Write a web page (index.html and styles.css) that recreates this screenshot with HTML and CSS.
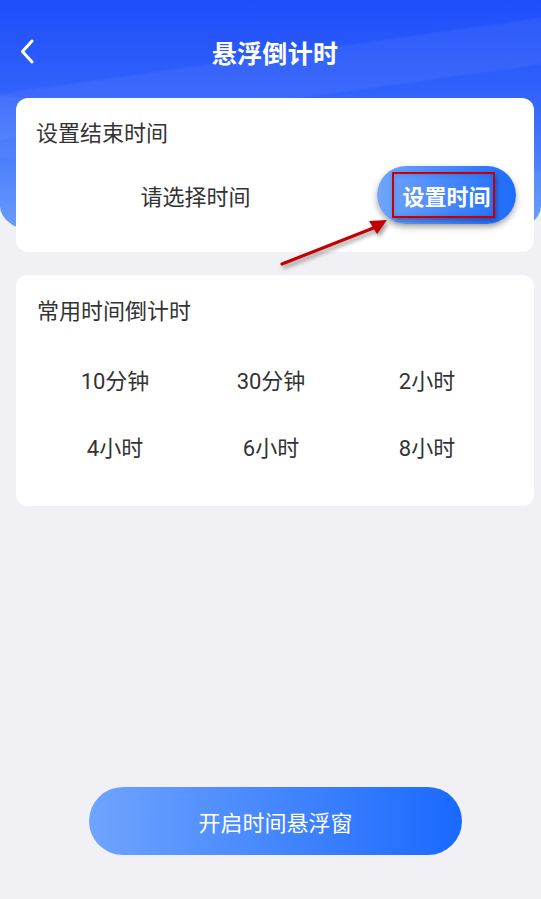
FILE: index.html
```html
<!DOCTYPE html>
<html lang="zh-CN">
<head>
  <meta charset="UTF-8" />
  <meta name="viewport" content="width=device-width, initial-scale=1.0" />
  <title>悬浮倒计时</title>
  <link rel="stylesheet" href="styles.css">
</head>
<body>
  <div class="page">
    <div class="header">
      <div class="nav">
        <svg class="back" width="14" height="25" viewBox="0 0 14 25">
          <path d="M12 2 L2.5 12.5 L12 23" fill="none" stroke="#ffffff" stroke-width="3" stroke-linecap="round" stroke-linejoin="round"/>
        </svg>
        <div class="title">悬浮倒计时</div>
      </div>
    </div>

    <div class="card card-end">
      <div class="card-title">设置结束时间</div>
      <div class="pick-row">
        <div class="pick-text">请选择时间</div>
        <button class="set-btn">
          设置时间
          <span class="mark"></span>
        </button>
      </div>
    </div>

    <div class="card card-common">
      <div class="card-title">常用时间倒计时</div>
      <div class="times">
        <div class="time-item">10分钟</div>
        <div class="time-item">30分钟</div>
        <div class="time-item">2小时</div>
        <div class="time-item">4小时</div>
        <div class="time-item">6小时</div>
        <div class="time-item">8小时</div>
      </div>
    </div>

    <button class="open-btn">开启时间悬浮窗</button>

    <!-- annotation arrow -->
    <svg class="arrow" width="140" height="80" viewBox="0 0 140 80">
      <line x1="22" y1="64" x2="116" y2="27" stroke="#c40000" stroke-width="3.2" stroke-linecap="round"/>
      <polygon points="127,20 109,21 117,34" fill="#c40000"/>
    </svg>
  </div>
</body>
</html>
```

FILE: styles.css
```css
body {
  margin: 0;
  font-family: Roboto, "Noto Sans CJK SC", sans-serif;
  background-color: #f1f0f4;
  color: #333333;
}

.page {
  position: relative;
  width: 541px;
  height: 899px;
  display: flex;
  flex-direction: column;
  overflow: hidden;
}

.header {
  height: 232px;
  flex-shrink: 0;
  background:
    linear-gradient(172deg, rgba(255, 255, 255, 0) 0%, rgba(255, 255, 255, 0) 30%, rgba(255, 255, 255, 0.05) 31%, rgba(255, 255, 255, 0.05) 45%, rgba(255, 255, 255, 0) 46%),
    linear-gradient(188deg, rgba(255, 255, 255, 0) 0%, rgba(255, 255, 255, 0) 55%, rgba(255, 255, 255, 0.04) 56%, rgba(255, 255, 255, 0.04) 75%, rgba(255, 255, 255, 0) 76%),
    linear-gradient(to bottom, #1f4efb 0%, #3162fb 40%, #5185fc 75%, #6b9dfc 100%);
  border-bottom-left-radius: 40px 26px;
  border-bottom-right-radius: 40px 26px;
}

.nav {
  position: relative;
  height: 92px;
  padding: 6px 0 0 9px;
  display: flex;
  align-items: center;
  justify-content: center;
}

.back {
  position: absolute;
  left: 20px;
  top: 39px;
}

.title {
  color: #ffffff;
  font-size: 25px;
  font-weight: bold;
  letter-spacing: 0.3px;
}

.card {
  background-color: #ffffff;
  border-radius: 12px;
  margin: 0 7px 0 16px;
}

.card-end {
  position: relative;
  margin-top: -134px;
  height: 154px;
  box-sizing: border-box;
  padding: 22px 18px 0 20px;
}

.card-title {
  font-size: 22px;
  line-height: 28px;
  color: #333333;
}

.pick-row {
  display: flex;
  align-items: center;
  margin-top: 18px;
}

.pick-text {
  flex: 1;
  text-align: center;
  font-size: 22px;
  padding-right: 22px;
}

.set-btn {
  position: relative;
  width: 139px;
  height: 58px;
  border: none;
  border-radius: 29px;
  background: linear-gradient(to right, #72a5f9, #1d6cfd);
  color: #ffffff;
  font-family: inherit;
  font-size: 22px;
  font-weight: bold;
  box-shadow: 0 3px 6px rgba(0, 0, 0, 0.35);
  padding: 0;
}

.mark {
  position: absolute;
  left: 15px;
  top: 6px;
  width: 99px;
  height: 42px;
  border: 2px solid #c80000;
  box-shadow: 2px 3px 5px rgba(0, 0, 50, 0.35), inset 0 0 6px rgba(0, 0, 60, 0.15);
}

.card-common {
  margin-top: 23px;
  height: 231px;
  box-sizing: border-box;
  padding: 23px 20px 0 21px;
}

.times {
  display: grid;
  grid-template-columns: repeat(3, 156px);
  grid-auto-rows: 67px;
  margin-top: 19px;
}

.time-item {
  display: flex;
  align-items: center;
  justify-content: center;
  font-size: 22px;
}

.open-btn {
  margin: auto 0 44px 89px;
  width: 373px;
  height: 68px;
  border: none;
  border-radius: 34px;
  background: linear-gradient(to right, #6fa4ff, #1a69ff);
  color: #ffffff;
  font-family: inherit;
  font-size: 22px;
}

.arrow {
  position: absolute;
  left: 260px;
  top: 200px;
  filter: drop-shadow(2px 3px 2px rgba(0, 0, 0, 0.4));
}
```
